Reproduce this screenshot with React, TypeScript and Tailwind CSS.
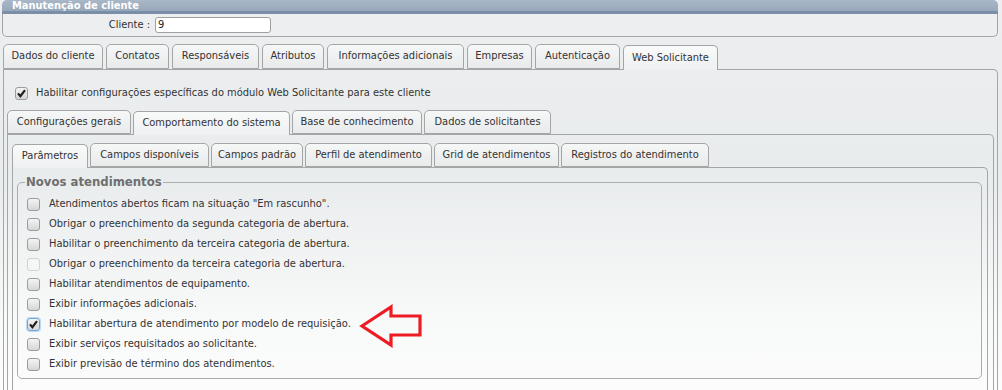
import React from 'react';

type Tab = { label: string; w: string; active?: boolean };

const mainTabs: Tab[] = [
  { label: 'Dados do cliente', w: 'w-[100px]' },
  { label: 'Contatos', w: 'w-[63px]' },
  { label: 'Responsáveis', w: 'w-[87px]' },
  { label: 'Atributos', w: 'w-[62px]' },
  { label: 'Informações adicionais', w: 'w-[137px]' },
  { label: 'Empresas', w: 'w-[65px]' },
  { label: 'Autenticação', w: 'w-[85px]' },
  { label: 'Web Solicitante', w: 'w-[95px]', active: true },
];

const webTabs: Tab[] = [
  { label: 'Configurações gerais', w: 'w-[124px]' },
  { label: 'Comportamento do sistema', w: 'w-[157px]', active: true },
  { label: 'Base de conhecimento', w: 'w-[130px]' },
  { label: 'Dados de solicitantes', w: 'w-[127px]' },
];

const sysTabs: Tab[] = [
  { label: 'Parâmetros', w: 'w-[76px]', active: true },
  { label: 'Campos disponíveis', w: 'w-[119px]' },
  { label: 'Campos padrão', w: 'w-[92px]' },
  { label: 'Perfil de atendimento', w: 'w-[127px]' },
  { label: 'Grid de atendimentos', w: 'w-[125px]' },
  { label: 'Registros do atendimento', w: 'w-[148px]' },
];

const options = [
  { label: 'Atendimentos abertos ficam na situação "Em rascunho".' },
  { label: 'Obrigar o preenchimento da segunda categoria de abertura.' },
  { label: 'Habilitar o preenchimento da terceira categoria de abertura.' },
  { label: 'Obrigar o preenchimento da terceira categoria de abertura.', disabled: true },
  { label: 'Habilitar atendimentos de equipamento.' },
  { label: 'Exibir informações adicionais.' },
  { label: 'Habilitar abertura de atendimento por modelo de requisição.', checked: true, focused: true },
  { label: 'Exibir serviços requisitados ao solicitante.' },
  { label: 'Exibir previsão de término dos atendimentos.' },
];

const Check: React.FC<{ checked?: boolean; disabled?: boolean; focused?: boolean }> = ({ checked, disabled, focused }) => (
  <span
    className={`relative inline-flex h-[13px] w-[13px] shrink-0 items-center justify-center rounded-[3px] border ${
      focused
        ? 'border-[#6ea6dc] shadow-[0_0_0_1px_#bcd8f2]'
        : disabled
        ? 'border-[#d2d2d2]'
        : 'border-[#9c9c9c]'
    } ${disabled ? 'bg-[#f6f6f6]' : 'bg-gradient-to-b from-[#f4f4f4] to-[#d6d6d6]'}`}
  >
    {checked && (
      <svg width="9" height="9" viewBox="0 0 9 9">
        <path d="M1 4.4 L3.4 7.2 L8 1.2" stroke="#1f1f1f" strokeWidth="2.2" fill="none" />
      </svg>
    )}
  </span>
);

const TabRow: React.FC<{ tabs: Tab[]; h: string; gap: string }> = ({ tabs, h, gap }) => (
  <div className={`flex items-end ${gap} ${h}`}>
    {tabs.map((t) => (
      <div
        key={t.label}
        className={`${t.w} h-full flex items-center justify-center rounded-t-[5px] border border-[#a5a5a5] whitespace-nowrap ${
          t.active
            ? 'border-b-0 relative z-10 -mb-px h-[calc(100%+1px)] bg-gradient-to-b from-[#f9fafa] to-[#eef0f1]'
            : 'bg-gradient-to-b from-[#f6f7f7] to-[#e8eaeb]'
        }`}
      >
        {t.label}
      </div>
    ))}
  </div>
);

export default function App() {
  return (
    <div className="relative h-[390px] w-[1002px] overflow-hidden bg-[linear-gradient(to_bottom,#eceeef_0%,#e9eced_45%,#f8f9f9_82%,#fcfcfc_100%)] font-['DejaVu_Sans_Condensed','DejaVu_Sans',sans-serif] text-[11px] text-[#333]">
      {/* header */}
      <div className="ml-[2px] w-[996px]">
        <div className="flex h-[14px] items-center rounded-t-[5px] border-b-[3px] border-[#7a8ea7] bg-gradient-to-b from-[#a9b7c7] to-[#97a8bb] pl-[10px] text-[11px] font-bold leading-none text-white">
          Manutenção de cliente
        </div>
        <div className="flex h-[23px] items-center rounded-b-[5px] border border-t-0 border-[#a5a5a5] bg-[#eceeef]">
          <span className="w-[150px] pr-[3px] text-right">Cliente :</span>
          <div className="ml-[2px] flex h-[16px] w-[116px] items-center rounded-[3px] border border-[#a0a0a0] bg-white pl-[2px] text-[11px] text-[#222]">
            9
          </div>
        </div>
      </div>

      {/* main tabs */}
      <div className="ml-[3px] mt-[7px] w-[995px]">
        <TabRow tabs={mainTabs} h="h-[25px]" gap="gap-[3px]" />
        <div className="rounded-tr-[5px] border border-b-0 border-[#a5a5a5] pl-[3px] pr-[3px] pt-[17px]">
          <label className="ml-[8px] flex h-[13px] items-center gap-[8px]">
            <Check checked />
            <span>Habilitar configurações específicas do módulo Web Solicitante para este cliente</span>
          </label>

          {/* web solicitante tabs */}
          <div className="mt-[10px]">
            <TabRow tabs={webTabs} h="h-[24px]" gap="gap-[2px]" />
            <div className="rounded-tr-[5px] border border-b-0 border-[#a5a5a5] pl-[4px] pr-[5px] pt-[8px]">
              <TabRow tabs={sysTabs} h="h-[24px]" gap="gap-[2px]" />
              <div className="rounded-tr-[5px] border border-b-0 border-[#a5a5a5] pl-[4px] pr-[5px] pt-[6px] pb-[20px]">
                <fieldset className="rounded-[5px] border border-[#acacac] pl-[9px] pr-[8px] pb-[4px]">
                  <legend className="ml-[-2px] px-[1px] text-[13px] font-bold leading-[16px] text-[#6f6f6f]">
                    Novos atendimentos
                  </legend>
                  <div className="pt-[4px]">
                    {options.map((o) => (
                      <label key={o.label} className="flex h-[20px] items-center gap-[9px]">
                        <Check checked={o.checked} disabled={o.disabled} focused={o.focused} />
                        <span>{o.label}</span>
                      </label>
                    ))}
                  </div>
                </fieldset>
              </div>
            </div>
          </div>
        </div>
      </div>

      {/* red annotation arrow */}
      <svg className="absolute left-[355px] top-[300px]" width="72" height="52" viewBox="355 300 72 52">
        <polygon
          points="362,326 391,307 391,316 420,316 420,335 391,335 391,345"
          fill="none"
          stroke="#ed1c24"
          strokeWidth="3.2"
          strokeLinejoin="miter"
        />
      </svg>
    </div>
  );
}
